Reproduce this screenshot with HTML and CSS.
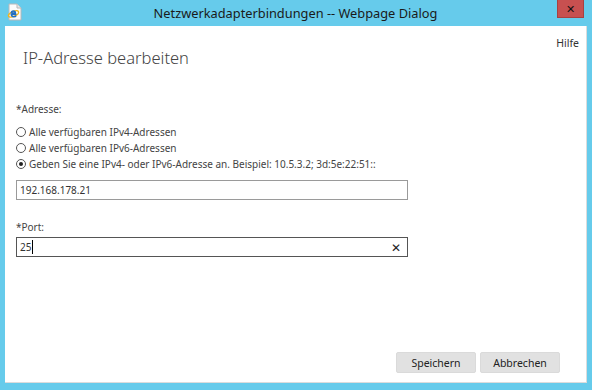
FILE: index.html
```html
<!DOCTYPE html>
<html lang="de">
<head>
    <meta charset="UTF-8">
    <title>Netzwerkadapterbindungen -- Webpage Dialog</title>
    <link rel="stylesheet" href="styles.css">
</head>
<body>
    <div class="titlebar">
        <svg class="ie-icon" width="16" height="18" viewBox="0 0 16 18">
            <path d="M3 1h8l4 4v12H3z" fill="#fbfbfb" stroke="#b8b8b8" stroke-width="1"/>
            <path d="M11 1v4h4" fill="#e8e8e8" stroke="#b8b8b8" stroke-width="1"/>
            <ellipse cx="7.5" cy="11" rx="5.5" ry="2.3" fill="none" stroke="#f2b619" stroke-width="1.3" transform="rotate(-25 7.5 11)"/>
            <path d="M10.5 11.2H5.3c0.2 1.6 1.2 2.6 2.6 2.6 1 0 1.8-0.5 2.2-1.2M5.3 10h4c0-1.2-0.8-2-2-2s-1.9 0.8-2 2" fill="none" stroke="#1f6fc4" stroke-width="1.6"/>
        </svg>
        <div class="title">Netzwerkadapterbindungen -- Webpage Dialog</div>
        <div class="close">&#x2715;</div>
    </div>

    <div class="dialog">
        <div class="header">
            <h1>IP-Adresse bearbeiten</h1>
            <a class="help">Hilfe</a>
        </div>

        <div class="form">
            <div class="label">*Adresse:</div>
            <label class="radio"><span class="dot"></span>Alle verfügbaren IPv4-Adressen</label>
            <label class="radio"><span class="dot"></span>Alle verfügbaren IPv6-Adressen</label>
            <label class="radio"><span class="dot checked"></span>Geben Sie eine IPv4- oder IPv6-Adresse an. Beispiel: 10.5.3.2; 3d:5e:22:51::</label>
            <div class="field">192.168.178.21</div>

            <div class="label port-label">*Port:</div>
            <div class="field active">25<span class="caret"></span><span class="clear">&#x2715;</span></div>
        </div>

        <div class="buttons">
            <button>Speichern</button>
            <button>Abbrechen</button>
        </div>
    </div>
</body>
</html>
```

FILE: styles.css
```css
/* Fenster */
body {
    margin: 0;
    width: 592px;
    height: 390px;
    background-color: #66cbeb;
    font-family: 'Noto Sans', 'DejaVu Sans', sans-serif;
    color: #444;
    overflow: hidden;
}

.titlebar {
    height: 26px;
    display: flex;
    align-items: flex-start;
}

.ie-icon {
    margin: 3px 0 0 6px;
}

.title {
    flex: 1;
    text-align: center;
    font-size: 12.8px;
    line-height: 26px;
    color: #1a1a1a;
    margin-left: 12px;
}

.close {
    width: 27px;
    height: 18px;
    margin-right: 8px;
    background-color: #c75050;
    border: 1px solid #a84040;
    border-top: none;
    color: #111;
    font-size: 11px;
    font-weight: bold;
    text-align: center;
    line-height: 18px;
    box-sizing: border-box;
}

/* Inhalt */
.dialog {
    margin: 0 5px;
    height: 357px;
    background-color: #fff;
    border-right: 1px solid #dcdcdc;
    border-bottom: 1px solid #dcdcdc;
    box-sizing: border-box;
    display: flex;
    flex-direction: column;
}

.header {
    display: flex;
    justify-content: space-between;
    align-items: flex-start;
}

h1 {
    margin: 20px 0 0 18px;
    font-size: 16.5px;
    font-weight: 300;
    color: #444;
}

.help {
    margin: 10px 7px 0 0;
    font-size: 10.5px;
    color: #333;
}

.form {
    padding: 0 0 0 11px;
    font-size: 10px;
    color: #444;
}

.label {
    margin-top: 33px;
    margin-bottom: 8px;
}

.port-label {
    margin-top: 20px;
    margin-bottom: 3px;
}

.radio {
    display: flex;
    align-items: center;
    height: 16px;
}

.dot {
    width: 10px;
    height: 10px;
    border: 1px solid #555;
    border-radius: 50%;
    margin-right: 3px;
    box-sizing: border-box;
    position: relative;
}

.dot.checked::after {
    content: "";
    position: absolute;
    left: 2px;
    top: 2px;
    width: 4px;
    height: 4px;
    border-radius: 50%;
    background-color: #222;
}

.field {
    width: 392px;
    height: 20px;
    margin-top: 8px;
    border: 1px solid #9a9a9a;
    box-sizing: border-box;
    padding: 0 3px;
    display: flex;
    align-items: center;
    color: #333;
}

.field.active {
    margin-top: 0;
    border-color: #555;
}

.caret {
    width: 1px;
    height: 14px;
    background-color: #000;
    margin-left: 1px;
}

.clear {
    margin-left: auto;
    margin-right: 3px;
    font-size: 12px;
    color: #222;
}

/* Schaltflächen */
.buttons {
    margin-top: auto;
    margin-bottom: 9px;
    display: flex;
    justify-content: flex-end;
    gap: 4px;
    padding-right: 26px;
}

button {
    width: 80px;
    height: 21px;
    background-color: #e1e1e1;
    border: 1px solid #dadada;
    border-radius: 2px;
    font-family: 'Noto Sans', 'DejaVu Sans', sans-serif;
    font-size: 10.5px;
    color: #222;
}
```
